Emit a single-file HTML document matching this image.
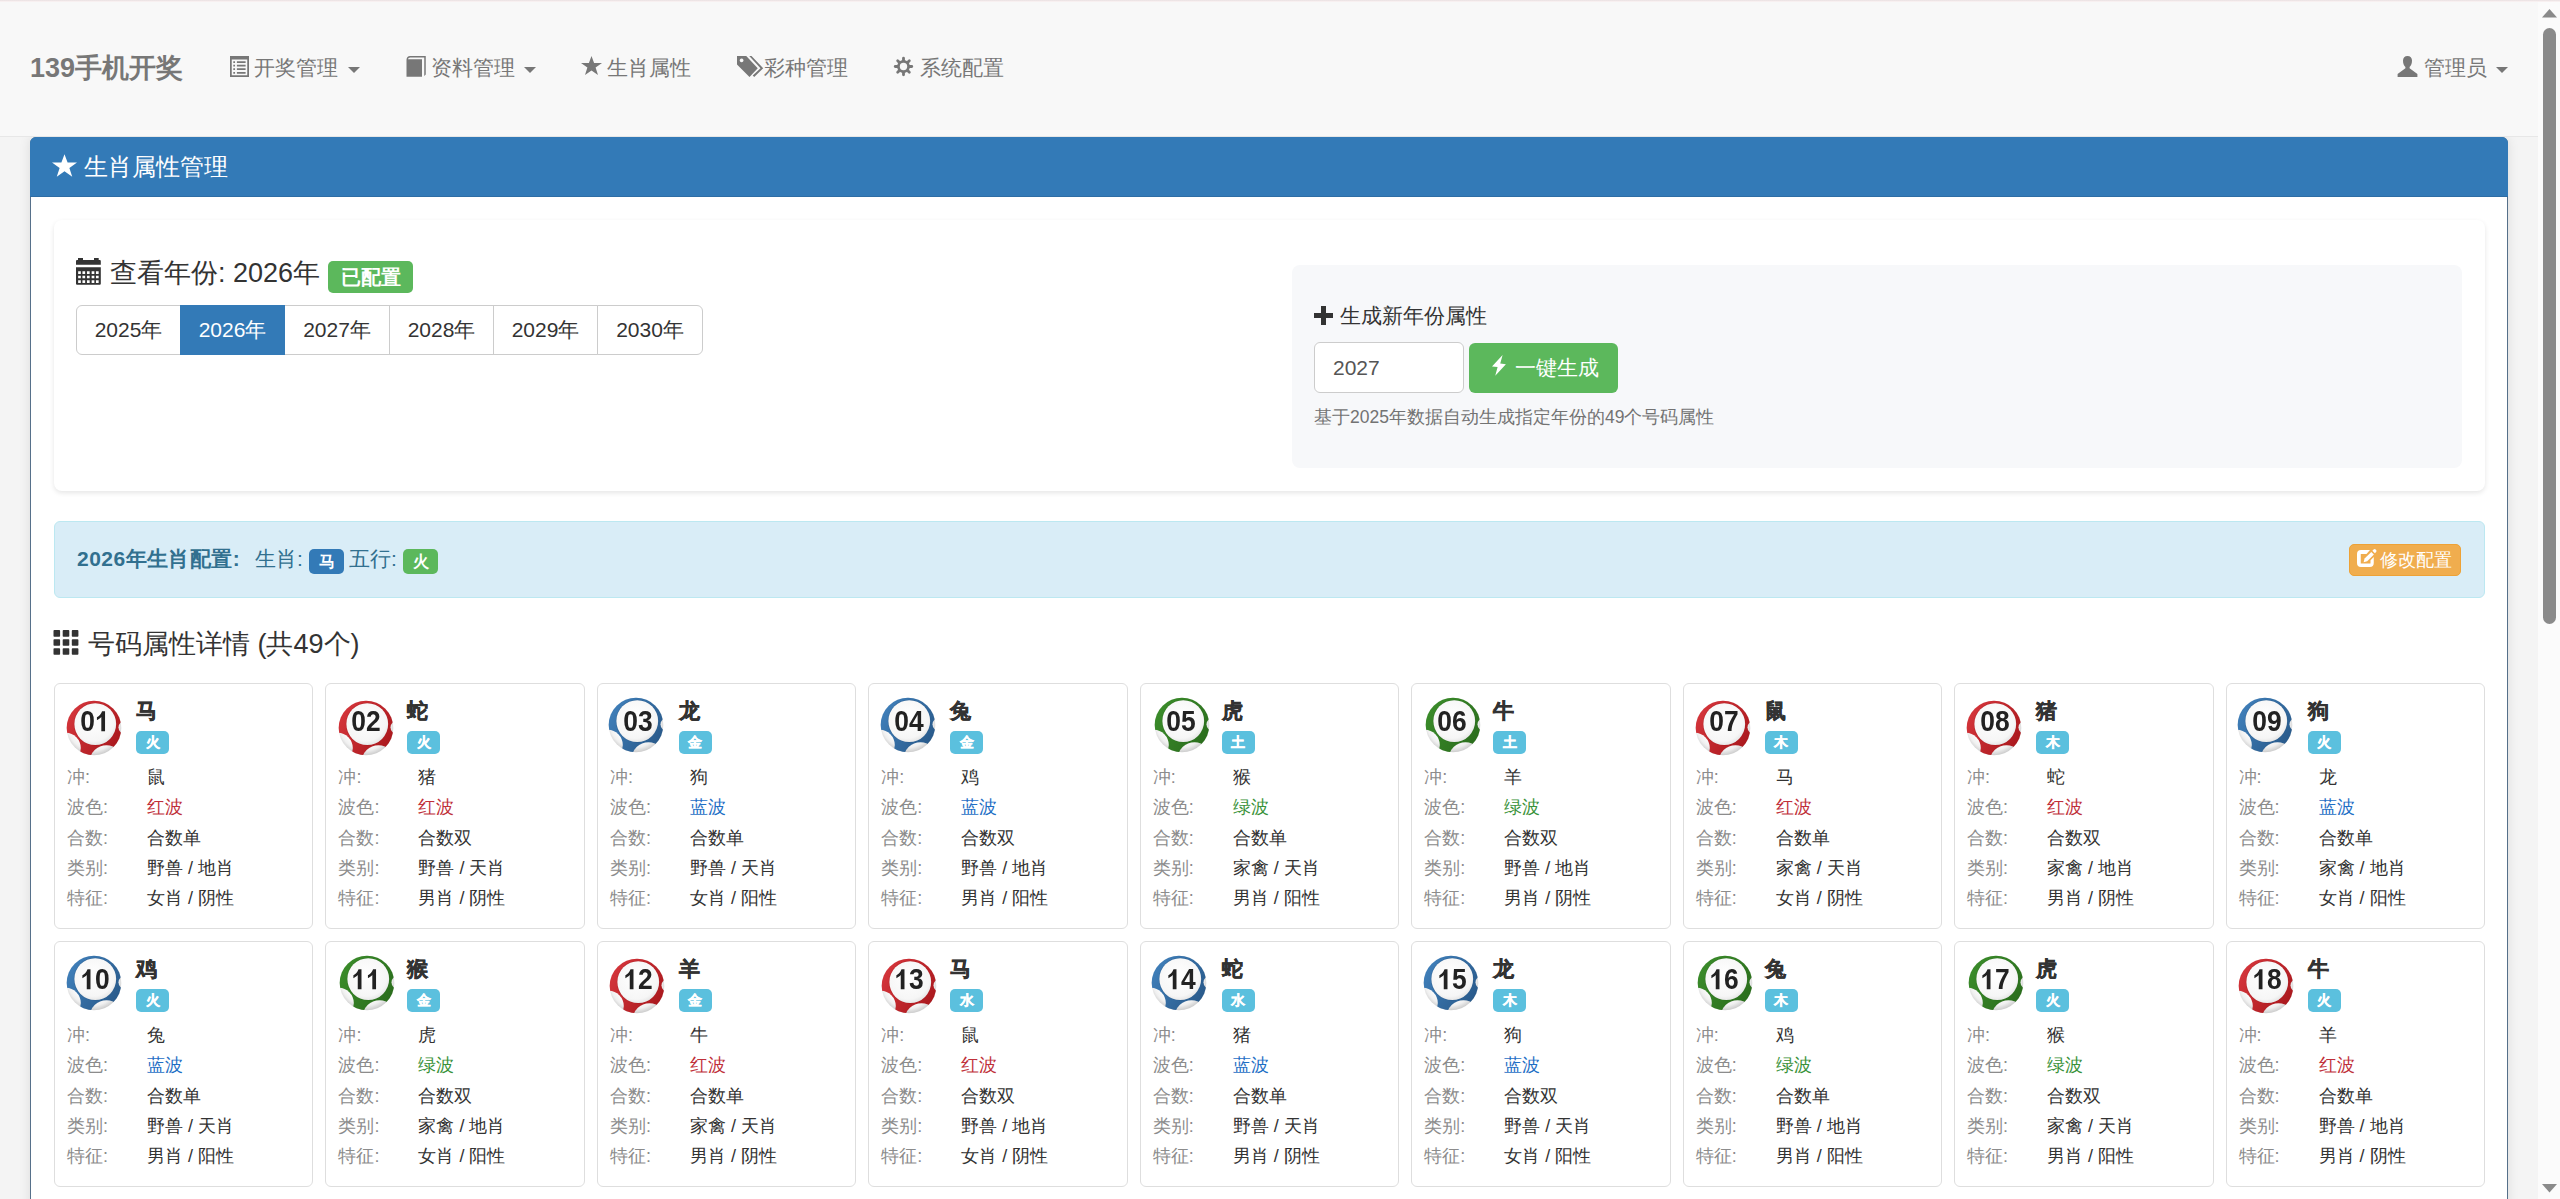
<!DOCTYPE html>
<html><head><meta charset="utf-8"><title>生肖属性管理</title>
<style>
*{box-sizing:border-box;margin:0;padding:0}
html,body{width:2560px;height:1199px;overflow:hidden}
body{background:#f4f4f4;font-family:"Liberation Sans",sans-serif;color:#333;position:relative}
.abs,.ic{position:absolute;z-index:3}
#topline{z-index:5;position:absolute;left:0;top:0;width:2560px;height:2px;background:linear-gradient(#e8dfe0,#fdf6f6)}
#navbar{z-index:2;position:absolute;left:0;top:0;width:2538px;height:137px;background:#f8f8f8;border-bottom:1px solid #e7e7e7}
.nt{z-index:3;position:absolute;top:53px;height:30px;line-height:30px;font-size:21px;color:#777;white-space:nowrap}
.brand{z-index:3;position:absolute;left:30px;top:52px;height:32px;line-height:32px;font-size:27px;font-weight:bold;color:#777;white-space:nowrap}
#sb{position:absolute;left:2538px;top:0;width:22px;height:1199px;background:#fbfbfb}
#thumb{position:absolute;left:2543px;top:28px;width:13px;height:596px;border-radius:7px;background:#8a8a8a}
#shadowL{position:absolute;left:0;top:137px;width:2538px;height:1062px;}
#panel{position:absolute;left:30px;top:137px;width:2478px;height:1100px;background:#fff;border:1px solid #56708a;border-radius:6px;box-shadow:0 0 12px rgba(0,0,0,.10)}
#phead{position:absolute;left:-1px;top:-1px;width:2478px;height:60px;background:#337ab7;border-radius:6px 6px 0 0;border-bottom:1px solid #2e6da4}
#phead .t{position:absolute;left:54px;top:14px;height:32px;line-height:32px;font-size:24px;color:#fff;white-space:nowrap}
#well{position:absolute;left:54px;top:220px;width:2431px;height:271px;background:#fff;border-radius:8px;box-shadow:0 2px 5px rgba(0,0,0,.1)}
.h4{position:absolute;font-size:27px;line-height:36px;color:#333;white-space:nowrap}
.lbl{display:inline-block;font-weight:bold;color:#fff;text-align:center;border-radius:5px;white-space:nowrap}
.btng{position:absolute;left:76px;top:305px;height:50px;display:flex}
.btng div{height:50px;line-height:48px;font-size:21px;text-align:center;border:1px solid #ccc;background:#fff;color:#333;margin-left:-1px}
.btng div:first-child{margin-left:0;border-radius:6px 0 0 6px}
.btng div:last-child{border-radius:0 6px 6px 0}
.btng div.act{background:#337ab7;border-color:#337ab7;color:#fff;position:relative;z-index:1}
#gen{position:absolute;left:1292px;top:265px;width:1170px;height:203px;background:#f7f8fa;border-radius:8px}
.inp{position:absolute;left:1314px;top:342px;width:150px;height:51px;border:1px solid #ccc;border-radius:6px;background:#fff;font-size:21px;line-height:49px;padding-left:18px;color:#555}
.bsucc{position:absolute;left:1469px;top:343px;width:149px;height:50px;border-radius:6px;background:#5cb85c;color:#fff;font-size:21px;line-height:50px;white-space:nowrap}
.help{position:absolute;left:1314px;top:403px;height:28px;line-height:28px;font-size:17.5px;color:#737373;white-space:nowrap}
#alert{position:absolute;left:54px;top:521px;width:2431px;height:77px;background:#d9edf7;border:1px solid #bce8f1;border-radius:6px}
.at{position:absolute;top:544px;height:30px;line-height:30px;font-size:21px;color:#31708f;white-space:nowrap}
.bwarn{position:absolute;left:2349px;top:544px;width:112px;height:32px;border-radius:5px;background:#f0ad4e;border:1px solid #eea236;color:#fff;font-size:18px;line-height:30px;white-space:nowrap}
.grid{position:absolute;left:54px;top:683px;width:2431px;display:grid;grid-template-columns:repeat(9,1fr);column-gap:12px;row-gap:12px}
.card{position:relative;height:246px;border:1px solid #dedede;border-radius:6px;background:#fff}
.ball{position:absolute;left:11px;top:16px} .bb{left:10.5px;top:13.3px} .bg{left:13px;top:13.3px} .br{left:11.2px;top:15.5px}
.d1{position:relative;color:transparent} .d1 svg{position:absolute;left:0;top:0;width:.5562em;height:1.1172em;fill:#222}
.num{position:absolute;left:12px;top:21.5px;width:56px;height:30px;line-height:30px;text-align:center;font-weight:bold;font-size:29px;color:#222;transform:scaleX(.91)}
.zname{position:absolute;left:81px;top:13px;-webkit-text-stroke:.5px #333;height:28px;line-height:28px;font-size:21px;font-weight:bold;color:#333}
.el{position:absolute;left:81px;top:47px;width:33px;height:23px;line-height:23px;font-size:13.5px;-webkit-text-stroke:.4px #fff;background:#5bc0de;border-radius:5px}
.row{position:absolute;left:12px;height:26px;line-height:26px;font-size:18px;white-space:nowrap}
.row .k{position:absolute;left:0;color:#8c8c8c;}
.row .v{position:absolute;left:80px;color:#333}
.r1{top:80px} .r2{top:110px} .r3{top:141px} .r4{top:171px} .r5{top:201px}
.red{color:#c0303a !important} .blue{color:#1f6fc5 !important} .green{color:#3a923a !important}
</style></head><body>
<svg width="0" height="0" style="position:absolute"><defs>
<radialGradient id="wp" cx="0.5" cy="0.4" r="0.6"><stop offset="0.6" stop-color="#ffffff"/><stop offset="1" stop-color="#d9d9d9"/></radialGradient>
<radialGradient id="wc" cx="0.45" cy="0.4" r="0.6"><stop offset="0" stop-color="#ffffff"/><stop offset="0.85" stop-color="#f6f6f6"/><stop offset="1" stop-color="#e8e8e8"/></radialGradient>

<radialGradient id="rim" gradientUnits="userSpaceOnUse" cx="27" cy="25" r="30"><stop offset="0.62" stop-color="#ffffff"/><stop offset="0.85" stop-color="#f0f0f0"/><stop offset="1" stop-color="#cfcfcf"/></radialGradient>
<mask id="mk"><rect x="0" y="0" width="56" height="56" fill="#fff"/><circle cx="-0.5" cy="48" r="15.3" fill="#000"/><circle cx="40.5" cy="62" r="16.8" fill="#000"/><circle cx="59" cy="27.3" r="6.5" fill="#000"/></mask>

<linearGradient id="lgr" x1="0" y1="0.2" x2="1" y2="0.8"><stop offset="0" stop-color="#d6363c"/><stop offset="1" stop-color="#a8171c"/></linearGradient>
<g id="ballr">
  <circle cx="28" cy="28" r="27.3" fill="url(#rim)"/>
  <circle cx="28" cy="28" r="27.3" fill="url(#lgr)" mask="url(#mk)"/>
  <circle cx="29.25" cy="24.1" r="21.4" fill="#a8171c" opacity=".6"/>
  <circle cx="29.25" cy="24.1" r="20.9" fill="url(#wc)"/>
</g>
<linearGradient id="lgb" x1="0" y1="0.2" x2="1" y2="0.8"><stop offset="0" stop-color="#4080bb"/><stop offset="1" stop-color="#285888"/></linearGradient>
<g id="ballb">
  <circle cx="28" cy="28" r="27.3" fill="url(#rim)"/>
  <circle cx="28" cy="28" r="27.3" fill="url(#lgb)" mask="url(#mk)"/>
  <circle cx="29.25" cy="24.1" r="21.4" fill="#285888" opacity=".6"/>
  <circle cx="29.25" cy="24.1" r="20.9" fill="url(#wc)"/>
</g>
<linearGradient id="lgg" x1="0" y1="0.2" x2="1" y2="0.8"><stop offset="0" stop-color="#3b8d2b"/><stop offset="1" stop-color="#2a6c1c"/></linearGradient>
<g id="ballg">
  <circle cx="28" cy="28" r="27.3" fill="url(#rim)"/>
  <circle cx="28" cy="28" r="27.3" fill="url(#lgg)" mask="url(#mk)"/>
  <circle cx="29.25" cy="24.1" r="21.4" fill="#2a6c1c" opacity=".6"/>
  <circle cx="29.25" cy="24.1" r="20.9" fill="url(#wc)"/>
</g>
</defs></svg>

<div id="navbar"></div>
<div id="topline"></div>
<div class="brand">139手机开奖</div>
<svg class="ic" style="left:230px;top:56px" width="19" height="21" viewBox="0 0 19 21"><path fill="#777" fill-rule="evenodd" d="M0 0h19v21H0z M1.75 3.4v15.85h15.5V3.4z"/><path fill="#777" d="M3.3 5.15h1.75v1.75H3.3zM6.9 5.15h8.7v1.75H6.9zM3.3 8.75h1.75v1.75H3.3zM6.9 8.75h8.7v1.75H6.9zM3.3 12.25h1.75v1.75H3.3zM6.9 12.25h8.7v1.75H6.9zM3.3 15.9h1.75v1.75H3.3zM6.9 15.9h8.7v1.75H6.9z"/></svg><div class="nt" style="left:254px">开奖管理</div><svg class="ic" style="left:348px;top:67px" width="12" height="6" viewBox="0 0 12 6"><path fill="#777" d="M0 0h12L6 6z"/></svg>
<svg class="ic" style="left:406px;top:56px" width="20" height="21" viewBox="0 0 20 21"><path fill="#777" d="M0.5 20.75V3.8C0.5 1.7 2 0.1 4 0.1H19.75V18.4L18.25 19.9V1.5H4.2C3 1.5 2.3 2.2 2 3.25H16V20.75z"/></svg><div class="nt" style="left:431px">资料管理</div><svg class="ic" style="left:524px;top:67px" width="12" height="6" viewBox="0 0 12 6"><path fill="#777" d="M0 0h12L6 6z"/></svg>
<svg class="ic" style="left:581px;top:56px" width="21" height="19" viewBox="0 0 21 19"><path fill="#777" d="M10.5 0l2.6 7h7.9l-6.4 4.6 2.4 7.4-6.5-4.6-6.5 4.6 2.4-7.4L0 7h7.9z"/></svg><div class="nt" style="left:607px">生肖属性</div>
<svg class="ic" style="left:737px;top:56px" width="27" height="22" viewBox="0 0 27 22"><path fill="#777" fill-rule="evenodd" d="M0 0.1H9.25L20.75 12.25L12.5 21L0 8.5Z M4.6 2.5a1.9 1.9 0 1 0 .01 0z"/><path fill="#777" d="M12.25 0.1H14.5L26.2 12.25L17.2 20.9L15.7 19.5L23.5 12.25Z"/></svg><div class="nt" style="left:764px">彩种管理</div>
<svg class="ic" style="left:893px;top:56px" width="21" height="21" viewBox="0 0 21 21"><g stroke="#777" stroke-width="2.8" stroke-linecap="round"><line x1="10.5" y1="10.5" x2="18.75" y2="10.50"/><line x1="10.5" y1="10.5" x2="16.33" y2="16.33"/><line x1="10.5" y1="10.5" x2="10.50" y2="18.75"/><line x1="10.5" y1="10.5" x2="4.67" y2="16.33"/><line x1="10.5" y1="10.5" x2="2.25" y2="10.50"/><line x1="10.5" y1="10.5" x2="4.67" y2="4.67"/><line x1="10.5" y1="10.5" x2="10.50" y2="2.25"/><line x1="10.5" y1="10.5" x2="16.33" y2="4.67"/></g><circle cx="10.5" cy="10.5" r="6.4" fill="#777"/><circle cx="10.5" cy="10.5" r="3.7" fill="#f8f8f8"/></svg><div class="nt" style="left:920px">系统配置</div>
<svg class="ic" style="left:2397px;top:56px" width="21" height="21" viewBox="0 0 21 21"><path fill="#777" d="M10.5 0C13.3 0 15 2 15 4.6c0 2.6-.8 5.2-2.4 6.4v1.3l7.8 5.6V21H.6v-3.1l7.8-5.6V11C6.8 9.8 6 7.2 6 4.6 6 2 7.7 0 10.5 0z"/></svg><div class="nt" style="left:2424px">管理员</div><svg class="ic" style="left:2496px;top:67px" width="12" height="6" viewBox="0 0 12 6"><path fill="#777" d="M0 0h12L6 6z"/></svg>

<div id="panel">
 <div id="phead"><svg class="ic" style="left:22px;top:17px" width="25" height="23" viewBox="0 0 21 19"><path fill="#fff" d="M10.5 0l2.6 7h7.9l-6.4 4.6 2.4 7.4-6.5-4.6-6.5 4.6 2.4-7.4L0 7h7.9z"/></svg><div class="t">生肖属性管理</div></div>
</div>

<div id="well"></div>
<svg class="ic" style="left:76px;top:258px" width="25" height="27" viewBox="0 0 25 27"><path fill="#333" d="M2 0h5v3H2zM18 0h4.7v3H18zM1 2h22.8a1 1 0 0 1 1 1v3.7H0V3a1 1 0 0 1 1-1z"/><path fill="#333" fill-rule="evenodd" d="M0 9.2h24.8v16.5a1 1 0 0 1-1 1H1a1 1 0 0 1-1-1z M2.15 13.35h2.7v2.7h-2.7zM6.45 13.35h2.7v2.7h-2.7zM10.95 13.35h2.7v2.7h-2.7zM15.65 13.35h2.7v2.7h-2.7zM19.95 13.35h2.7v2.7h-2.7zM2.15 17.65h2.7v2.7h-2.7zM6.45 17.65h2.7v2.7h-2.7zM10.95 17.65h2.7v2.7h-2.7zM15.65 17.65h2.7v2.7h-2.7zM19.95 17.65h2.7v2.7h-2.7zM2.15 22.35h2.7v2.7h-2.7zM6.45 22.35h2.7v2.7h-2.7zM10.95 22.35h2.7v2.7h-2.7zM15.65 22.35h2.7v2.7h-2.7zM19.95 22.35h2.7v2.7h-2.7z"/></svg>
<div class="h4" style="left:110px;top:255px">查看年份: 2026年</div>
<span class="lbl" style="position:absolute;left:328px;top:261px;width:85px;height:32px;line-height:32px;font-size:20px;background:#5cb85c">已配置</span>
<div class="btng">
 <div style="width:105px">2025年</div><div class="act" style="width:105px">2026年</div><div style="width:106px">2027年</div><div style="width:105px">2028年</div><div style="width:105px">2029年</div><div style="width:106px">2030年</div>
</div>

<div id="gen"></div>
<svg class="ic" style="left:1314px;top:306px" width="19" height="19" viewBox="0 0 19 19"><path fill="#333" d="M7 0h5v7h7v5h-7v7H7v-7H0V7h7z"/></svg>
<div class="h4" style="left:1340px;top:301px;font-size:21px;line-height:30px">生成新年份属性</div>
<div class="inp">2027</div>
<div class="bsucc"><svg style="position:absolute;left:21px;top:11px" width="18" height="23" viewBox="0 0 18 23"><path fill="#fff" d="M12.6 1L2 12.5L7.6 13.1L5.25 21.75L15.9 10.25L10.25 9.6Z"/></svg><span style="position:absolute;left:46px;top:0">一键生成</span></div>
<div class="help">基于2025年数据自动生成指定年份的49个号码属性</div>

<div id="alert"></div>
<div class="at" style="left:77px;font-weight:bold;letter-spacing:.45px">2026年生肖配置:</div>
<div class="at" style="left:255px">生肖:</div>
<span class="lbl" style="position:absolute;left:309px;top:549px;width:35px;height:25px;line-height:25px;font-size:16px;background:#337ab7">马</span>
<div class="at" style="left:349px">五行:</div>
<span class="lbl" style="position:absolute;left:403px;top:549px;width:35px;height:25px;line-height:25px;font-size:16px;background:#5cb85c">火</span>
<div class="bwarn"><svg style="position:absolute;left:5px;top:3px" width="22" height="22" viewBox="0 0 22 22"><path fill="#fff" d="M15 2.1H6A4 4 0 0 0 2 6.1V15.1A4 4 0 0 0 6 19.1H14.75A4 4 0 0 0 18.75 15.1V9L15.5 12.2V15.5H5.75V6.1H11.5Z"/><path fill="#fff" d="M8.6 14.2L9.6 10.6L16.3 3.9L18.9 6.5L12.2 13.2Z"/><path fill="#fff" d="M17.4 2.7L18.6 1.5A1.5 1.5 0 0 1 20.6 1.5L21.1 2A1.5 1.5 0 0 1 21.1 4L19.9 5.2Z"/></svg><span style="position:absolute;left:30px;top:0">修改配置</span></div>

<svg class="ic" style="left:53px;top:630px" width="26" height="25" viewBox="0 0 26 25"><g fill="#333"><rect x="0.5" y="0.1" width="6.6" height="6.6" rx="0.8"/><rect x="9.7" y="0.1" width="6.6" height="6.6" rx="0.8"/><rect x="18.8" y="0.1" width="6.6" height="6.6" rx="0.8"/><rect x="0.5" y="9.2" width="6.6" height="6.6" rx="0.8"/><rect x="9.7" y="9.2" width="6.6" height="6.6" rx="0.8"/><rect x="18.8" y="9.2" width="6.6" height="6.6" rx="0.8"/><rect x="0.5" y="18.2" width="6.6" height="6.6" rx="0.8"/><rect x="9.7" y="18.2" width="6.6" height="6.6" rx="0.8"/><rect x="18.8" y="18.2" width="6.6" height="6.6" rx="0.8"/></g></svg>
<div class="h4" style="left:88px;top:626px;font-size:27px;line-height:36px">号码属性详情 (共49个)</div>

<div class="grid">
<div class="card">
 <div class="chead"><svg class="ball br" width="56" height="56" viewBox="0 0 56 56"><use href="#ballr"/></svg><div class="num">0<span class="d1">1<svg viewBox="0 -1854 1139 2288" preserveAspectRatio="none"><path transform="scale(1,-1)" d="M780 0H490V1000C400 915 270 835 150 780V990C320 1060 470 1190 550 1409H780Z"/></svg></span></div><div class="zn"><div class="zname">马</div><span class="lbl el">火</span></div></div>
 <div class="row r1"><span class="k">冲:</span><span class="v">鼠</span></div>
 <div class="row r2"><span class="k">波色:</span><span class="v red">红波</span></div>
 <div class="row r3"><span class="k">合数:</span><span class="v">合数单</span></div>
 <div class="row r4"><span class="k">类别:</span><span class="v">野兽 / 地肖</span></div>
 <div class="row r5"><span class="k">特征:</span><span class="v">女肖 / 阴性</span></div>
</div><div class="card">
 <div class="chead"><svg class="ball br" width="56" height="56" viewBox="0 0 56 56"><use href="#ballr"/></svg><div class="num">02</div><div class="zn"><div class="zname">蛇</div><span class="lbl el">火</span></div></div>
 <div class="row r1"><span class="k">冲:</span><span class="v">猪</span></div>
 <div class="row r2"><span class="k">波色:</span><span class="v red">红波</span></div>
 <div class="row r3"><span class="k">合数:</span><span class="v">合数双</span></div>
 <div class="row r4"><span class="k">类别:</span><span class="v">野兽 / 天肖</span></div>
 <div class="row r5"><span class="k">特征:</span><span class="v">男肖 / 阴性</span></div>
</div><div class="card">
 <div class="chead"><svg class="ball bb" width="56" height="56" viewBox="0 0 56 56"><use href="#ballb"/></svg><div class="num">03</div><div class="zn"><div class="zname">龙</div><span class="lbl el">金</span></div></div>
 <div class="row r1"><span class="k">冲:</span><span class="v">狗</span></div>
 <div class="row r2"><span class="k">波色:</span><span class="v blue">蓝波</span></div>
 <div class="row r3"><span class="k">合数:</span><span class="v">合数单</span></div>
 <div class="row r4"><span class="k">类别:</span><span class="v">野兽 / 天肖</span></div>
 <div class="row r5"><span class="k">特征:</span><span class="v">女肖 / 阳性</span></div>
</div><div class="card">
 <div class="chead"><svg class="ball bb" width="56" height="56" viewBox="0 0 56 56"><use href="#ballb"/></svg><div class="num">04</div><div class="zn"><div class="zname">兔</div><span class="lbl el">金</span></div></div>
 <div class="row r1"><span class="k">冲:</span><span class="v">鸡</span></div>
 <div class="row r2"><span class="k">波色:</span><span class="v blue">蓝波</span></div>
 <div class="row r3"><span class="k">合数:</span><span class="v">合数双</span></div>
 <div class="row r4"><span class="k">类别:</span><span class="v">野兽 / 地肖</span></div>
 <div class="row r5"><span class="k">特征:</span><span class="v">男肖 / 阳性</span></div>
</div><div class="card">
 <div class="chead"><svg class="ball bg" width="56" height="56" viewBox="0 0 56 56"><use href="#ballg"/></svg><div class="num">05</div><div class="zn"><div class="zname">虎</div><span class="lbl el">土</span></div></div>
 <div class="row r1"><span class="k">冲:</span><span class="v">猴</span></div>
 <div class="row r2"><span class="k">波色:</span><span class="v green">绿波</span></div>
 <div class="row r3"><span class="k">合数:</span><span class="v">合数单</span></div>
 <div class="row r4"><span class="k">类别:</span><span class="v">家禽 / 天肖</span></div>
 <div class="row r5"><span class="k">特征:</span><span class="v">男肖 / 阳性</span></div>
</div><div class="card">
 <div class="chead"><svg class="ball bg" width="56" height="56" viewBox="0 0 56 56"><use href="#ballg"/></svg><div class="num">06</div><div class="zn"><div class="zname">牛</div><span class="lbl el">土</span></div></div>
 <div class="row r1"><span class="k">冲:</span><span class="v">羊</span></div>
 <div class="row r2"><span class="k">波色:</span><span class="v green">绿波</span></div>
 <div class="row r3"><span class="k">合数:</span><span class="v">合数双</span></div>
 <div class="row r4"><span class="k">类别:</span><span class="v">野兽 / 地肖</span></div>
 <div class="row r5"><span class="k">特征:</span><span class="v">男肖 / 阴性</span></div>
</div><div class="card">
 <div class="chead"><svg class="ball br" width="56" height="56" viewBox="0 0 56 56"><use href="#ballr"/></svg><div class="num">07</div><div class="zn"><div class="zname">鼠</div><span class="lbl el">木</span></div></div>
 <div class="row r1"><span class="k">冲:</span><span class="v">马</span></div>
 <div class="row r2"><span class="k">波色:</span><span class="v red">红波</span></div>
 <div class="row r3"><span class="k">合数:</span><span class="v">合数单</span></div>
 <div class="row r4"><span class="k">类别:</span><span class="v">家禽 / 天肖</span></div>
 <div class="row r5"><span class="k">特征:</span><span class="v">女肖 / 阴性</span></div>
</div><div class="card">
 <div class="chead"><svg class="ball br" width="56" height="56" viewBox="0 0 56 56"><use href="#ballr"/></svg><div class="num">08</div><div class="zn"><div class="zname">猪</div><span class="lbl el">木</span></div></div>
 <div class="row r1"><span class="k">冲:</span><span class="v">蛇</span></div>
 <div class="row r2"><span class="k">波色:</span><span class="v red">红波</span></div>
 <div class="row r3"><span class="k">合数:</span><span class="v">合数双</span></div>
 <div class="row r4"><span class="k">类别:</span><span class="v">家禽 / 地肖</span></div>
 <div class="row r5"><span class="k">特征:</span><span class="v">男肖 / 阴性</span></div>
</div><div class="card">
 <div class="chead"><svg class="ball bb" width="56" height="56" viewBox="0 0 56 56"><use href="#ballb"/></svg><div class="num">09</div><div class="zn"><div class="zname">狗</div><span class="lbl el">火</span></div></div>
 <div class="row r1"><span class="k">冲:</span><span class="v">龙</span></div>
 <div class="row r2"><span class="k">波色:</span><span class="v blue">蓝波</span></div>
 <div class="row r3"><span class="k">合数:</span><span class="v">合数单</span></div>
 <div class="row r4"><span class="k">类别:</span><span class="v">家禽 / 地肖</span></div>
 <div class="row r5"><span class="k">特征:</span><span class="v">女肖 / 阳性</span></div>
</div><div class="card">
 <div class="chead"><svg class="ball bb" width="56" height="56" viewBox="0 0 56 56"><use href="#ballb"/></svg><div class="num"><span class="d1">1<svg viewBox="0 -1854 1139 2288" preserveAspectRatio="none"><path transform="scale(1,-1)" d="M780 0H490V1000C400 915 270 835 150 780V990C320 1060 470 1190 550 1409H780Z"/></svg></span>0</div><div class="zn"><div class="zname">鸡</div><span class="lbl el">火</span></div></div>
 <div class="row r1"><span class="k">冲:</span><span class="v">兔</span></div>
 <div class="row r2"><span class="k">波色:</span><span class="v blue">蓝波</span></div>
 <div class="row r3"><span class="k">合数:</span><span class="v">合数单</span></div>
 <div class="row r4"><span class="k">类别:</span><span class="v">野兽 / 天肖</span></div>
 <div class="row r5"><span class="k">特征:</span><span class="v">男肖 / 阳性</span></div>
</div><div class="card">
 <div class="chead"><svg class="ball bg" width="56" height="56" viewBox="0 0 56 56"><use href="#ballg"/></svg><div class="num"><span class="d1">1<svg viewBox="0 -1854 1139 2288" preserveAspectRatio="none"><path transform="scale(1,-1)" d="M780 0H490V1000C400 915 270 835 150 780V990C320 1060 470 1190 550 1409H780Z"/></svg></span><span class="d1">1<svg viewBox="0 -1854 1139 2288" preserveAspectRatio="none"><path transform="scale(1,-1)" d="M780 0H490V1000C400 915 270 835 150 780V990C320 1060 470 1190 550 1409H780Z"/></svg></span></div><div class="zn"><div class="zname">猴</div><span class="lbl el">金</span></div></div>
 <div class="row r1"><span class="k">冲:</span><span class="v">虎</span></div>
 <div class="row r2"><span class="k">波色:</span><span class="v green">绿波</span></div>
 <div class="row r3"><span class="k">合数:</span><span class="v">合数双</span></div>
 <div class="row r4"><span class="k">类别:</span><span class="v">家禽 / 地肖</span></div>
 <div class="row r5"><span class="k">特征:</span><span class="v">女肖 / 阳性</span></div>
</div><div class="card">
 <div class="chead"><svg class="ball br" width="56" height="56" viewBox="0 0 56 56"><use href="#ballr"/></svg><div class="num"><span class="d1">1<svg viewBox="0 -1854 1139 2288" preserveAspectRatio="none"><path transform="scale(1,-1)" d="M780 0H490V1000C400 915 270 835 150 780V990C320 1060 470 1190 550 1409H780Z"/></svg></span>2</div><div class="zn"><div class="zname">羊</div><span class="lbl el">金</span></div></div>
 <div class="row r1"><span class="k">冲:</span><span class="v">牛</span></div>
 <div class="row r2"><span class="k">波色:</span><span class="v red">红波</span></div>
 <div class="row r3"><span class="k">合数:</span><span class="v">合数单</span></div>
 <div class="row r4"><span class="k">类别:</span><span class="v">家禽 / 天肖</span></div>
 <div class="row r5"><span class="k">特征:</span><span class="v">男肖 / 阴性</span></div>
</div><div class="card">
 <div class="chead"><svg class="ball br" width="56" height="56" viewBox="0 0 56 56"><use href="#ballr"/></svg><div class="num"><span class="d1">1<svg viewBox="0 -1854 1139 2288" preserveAspectRatio="none"><path transform="scale(1,-1)" d="M780 0H490V1000C400 915 270 835 150 780V990C320 1060 470 1190 550 1409H780Z"/></svg></span>3</div><div class="zn"><div class="zname">马</div><span class="lbl el">水</span></div></div>
 <div class="row r1"><span class="k">冲:</span><span class="v">鼠</span></div>
 <div class="row r2"><span class="k">波色:</span><span class="v red">红波</span></div>
 <div class="row r3"><span class="k">合数:</span><span class="v">合数双</span></div>
 <div class="row r4"><span class="k">类别:</span><span class="v">野兽 / 地肖</span></div>
 <div class="row r5"><span class="k">特征:</span><span class="v">女肖 / 阴性</span></div>
</div><div class="card">
 <div class="chead"><svg class="ball bb" width="56" height="56" viewBox="0 0 56 56"><use href="#ballb"/></svg><div class="num"><span class="d1">1<svg viewBox="0 -1854 1139 2288" preserveAspectRatio="none"><path transform="scale(1,-1)" d="M780 0H490V1000C400 915 270 835 150 780V990C320 1060 470 1190 550 1409H780Z"/></svg></span>4</div><div class="zn"><div class="zname">蛇</div><span class="lbl el">水</span></div></div>
 <div class="row r1"><span class="k">冲:</span><span class="v">猪</span></div>
 <div class="row r2"><span class="k">波色:</span><span class="v blue">蓝波</span></div>
 <div class="row r3"><span class="k">合数:</span><span class="v">合数单</span></div>
 <div class="row r4"><span class="k">类别:</span><span class="v">野兽 / 天肖</span></div>
 <div class="row r5"><span class="k">特征:</span><span class="v">男肖 / 阴性</span></div>
</div><div class="card">
 <div class="chead"><svg class="ball bb" width="56" height="56" viewBox="0 0 56 56"><use href="#ballb"/></svg><div class="num"><span class="d1">1<svg viewBox="0 -1854 1139 2288" preserveAspectRatio="none"><path transform="scale(1,-1)" d="M780 0H490V1000C400 915 270 835 150 780V990C320 1060 470 1190 550 1409H780Z"/></svg></span>5</div><div class="zn"><div class="zname">龙</div><span class="lbl el">木</span></div></div>
 <div class="row r1"><span class="k">冲:</span><span class="v">狗</span></div>
 <div class="row r2"><span class="k">波色:</span><span class="v blue">蓝波</span></div>
 <div class="row r3"><span class="k">合数:</span><span class="v">合数双</span></div>
 <div class="row r4"><span class="k">类别:</span><span class="v">野兽 / 天肖</span></div>
 <div class="row r5"><span class="k">特征:</span><span class="v">女肖 / 阳性</span></div>
</div><div class="card">
 <div class="chead"><svg class="ball bg" width="56" height="56" viewBox="0 0 56 56"><use href="#ballg"/></svg><div class="num"><span class="d1">1<svg viewBox="0 -1854 1139 2288" preserveAspectRatio="none"><path transform="scale(1,-1)" d="M780 0H490V1000C400 915 270 835 150 780V990C320 1060 470 1190 550 1409H780Z"/></svg></span>6</div><div class="zn"><div class="zname">兔</div><span class="lbl el">木</span></div></div>
 <div class="row r1"><span class="k">冲:</span><span class="v">鸡</span></div>
 <div class="row r2"><span class="k">波色:</span><span class="v green">绿波</span></div>
 <div class="row r3"><span class="k">合数:</span><span class="v">合数单</span></div>
 <div class="row r4"><span class="k">类别:</span><span class="v">野兽 / 地肖</span></div>
 <div class="row r5"><span class="k">特征:</span><span class="v">男肖 / 阳性</span></div>
</div><div class="card">
 <div class="chead"><svg class="ball bg" width="56" height="56" viewBox="0 0 56 56"><use href="#ballg"/></svg><div class="num"><span class="d1">1<svg viewBox="0 -1854 1139 2288" preserveAspectRatio="none"><path transform="scale(1,-1)" d="M780 0H490V1000C400 915 270 835 150 780V990C320 1060 470 1190 550 1409H780Z"/></svg></span>7</div><div class="zn"><div class="zname">虎</div><span class="lbl el">火</span></div></div>
 <div class="row r1"><span class="k">冲:</span><span class="v">猴</span></div>
 <div class="row r2"><span class="k">波色:</span><span class="v green">绿波</span></div>
 <div class="row r3"><span class="k">合数:</span><span class="v">合数双</span></div>
 <div class="row r4"><span class="k">类别:</span><span class="v">家禽 / 天肖</span></div>
 <div class="row r5"><span class="k">特征:</span><span class="v">男肖 / 阳性</span></div>
</div><div class="card">
 <div class="chead"><svg class="ball br" width="56" height="56" viewBox="0 0 56 56"><use href="#ballr"/></svg><div class="num"><span class="d1">1<svg viewBox="0 -1854 1139 2288" preserveAspectRatio="none"><path transform="scale(1,-1)" d="M780 0H490V1000C400 915 270 835 150 780V990C320 1060 470 1190 550 1409H780Z"/></svg></span>8</div><div class="zn"><div class="zname">牛</div><span class="lbl el">火</span></div></div>
 <div class="row r1"><span class="k">冲:</span><span class="v">羊</span></div>
 <div class="row r2"><span class="k">波色:</span><span class="v red">红波</span></div>
 <div class="row r3"><span class="k">合数:</span><span class="v">合数单</span></div>
 <div class="row r4"><span class="k">类别:</span><span class="v">野兽 / 地肖</span></div>
 <div class="row r5"><span class="k">特征:</span><span class="v">男肖 / 阴性</span></div>
</div>
</div>

<div id="sb"></div>
<div id="thumb"></div>
<svg class="ic" style="left:2542px;top:9px" width="15" height="9" viewBox="0 0 15 9"><path fill="#8a8a8a" d="M7.5 0L15 8.5H0z"/></svg>
<svg class="ic" style="left:2542px;top:1184px" width="15" height="9" viewBox="0 0 15 9"><path fill="#8a8a8a" d="M0 0h15L7.5 8.5z"/></svg>
</body></html>
